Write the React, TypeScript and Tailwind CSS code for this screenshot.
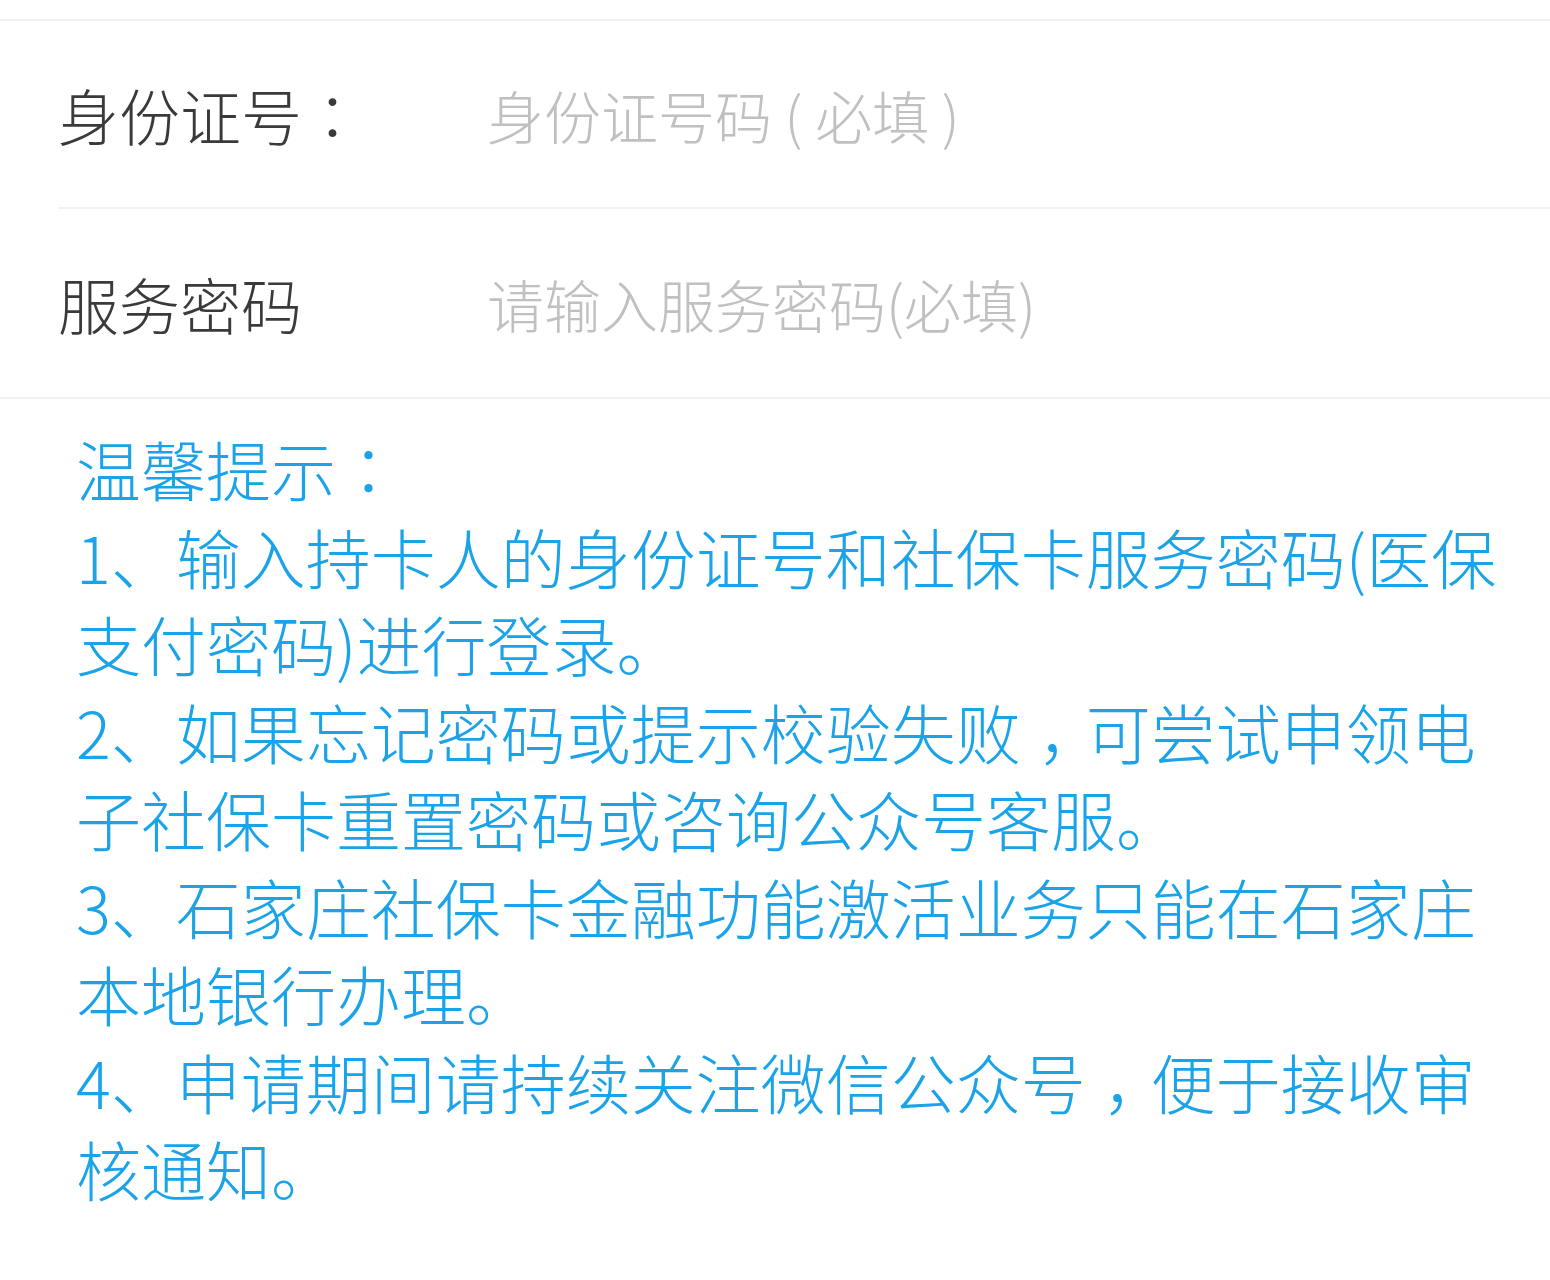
import React from "react";

const tips: string[] = [
  "1、输入持卡人的身份证号和社保卡服务密码(医保支付密码)进行登录。",
  "2、如果忘记密码或提示校验失败，可尝试申领电子社保卡重置密码或咨询公众号客服。",
  "3、石家庄社保卡金融功能激活业务只能在石家庄本地银行办理。",
  "4、申请期间请持续关注微信公众号，便于接收审核通知。",
];

// colon and comma are drawn centred in their cell
function Txt({ children }: { children: string }) {
  const parts = children.split(/([：，])/);
  return (
    <>
      {parts.map((p, i) => {
        if (p === "：")
          return (
            <span key={i} style={{ fontFamily: '"Noto Sans CJK TC", sans-serif' }}>
              {p}
            </span>
          );
        if (p === "，")
          return (
            <span key={i} className="pl-[0.26em] tracking-[-0.26em]">
              {p}
            </span>
          );
        return <React.Fragment key={i}>{p}</React.Fragment>;
      })}
    </>
  );
}

function Field({
  label,
  placeholder,
  type = "text",
  divider,
}: {
  label: string;
  placeholder: string;
  type?: string;
  divider?: boolean;
}) {
  return (
    <div className={`flex items-center h-[188px] ml-[58px] ${divider ? "border-b-2 border-[#f2f2f2]" : ""}`}>
      <label className="w-[429px] shrink-0 text-[61px] font-light text-[#3a3a3a] leading-none">
        <Txt>{label}</Txt>
      </label>
      <input
        type={type}
        placeholder={placeholder}
        className="flex-1 min-w-0 bg-transparent outline-none text-[57px] font-light leading-none text-[#444] placeholder:text-[#c0c0c0]"
      />
    </div>
  );
}

export default function App() {
  return (
    <div
      className="w-[1550px] min-h-[1280px] bg-white pt-[19px]"
      style={{ fontFamily: '"Microsoft YaHei", "Noto Sans CJK SC", sans-serif' }}
    >
      <form className="border-t-2 border-b-2 border-[#f2f2f2]">
        <Field label="身份证号：" placeholder="身份证号码 ( 必填 )" divider />
        <Field label="服务密码" placeholder="请输入服务密码(必填)" type="password" />
      </form>

      <div className="pl-[76px] pr-[30px] pt-[26px] text-[#1aa3e8] text-[65px] font-light leading-[87.5px]">
        <p>
          <Txt>温馨提示：</Txt>
        </p>
        {tips.map((t, i) => (
          <p key={i}>
            <Txt>{t}</Txt>
          </p>
        ))}
      </div>
    </div>
  );
}
